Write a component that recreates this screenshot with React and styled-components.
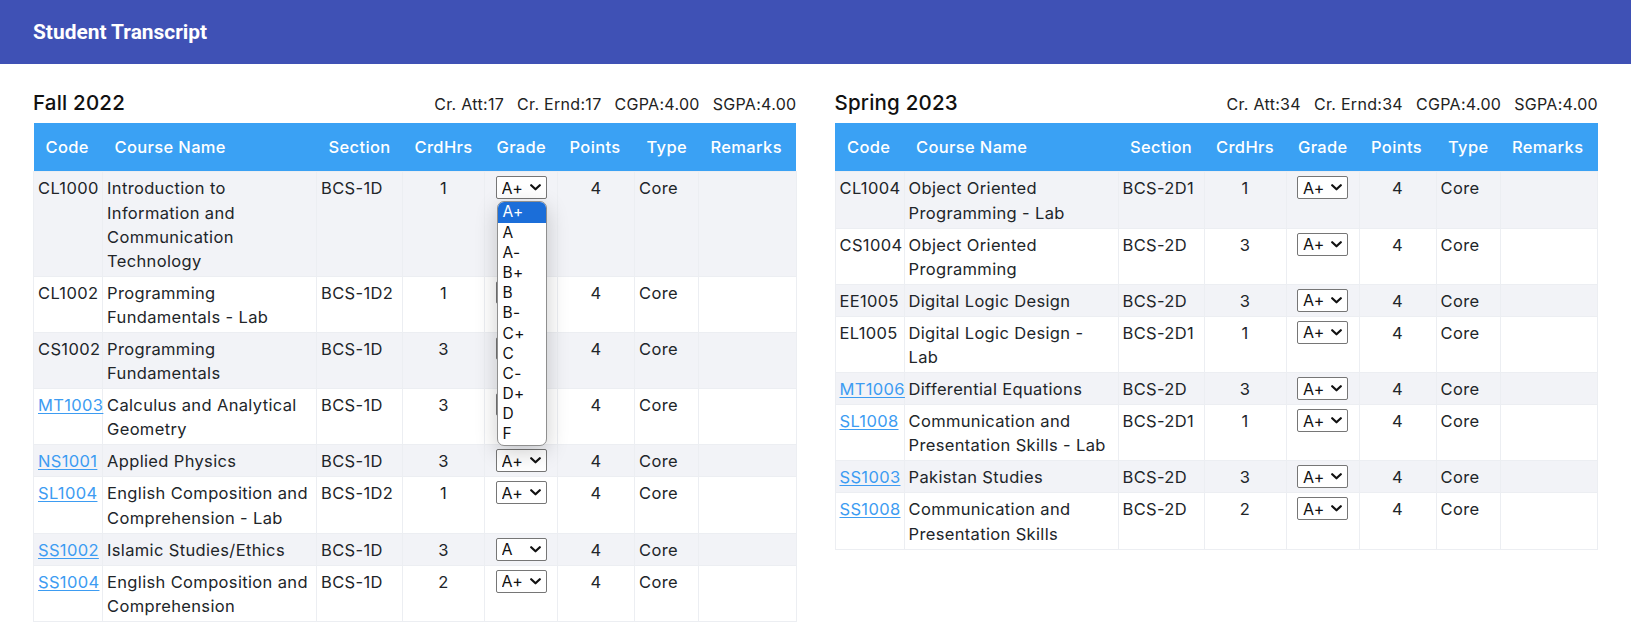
import React from "react";
import styled, { createGlobalStyle } from "styled-components";

const GlobalStyle = createGlobalStyle`
  html, body { margin: 0; padding: 0; background: #ffffff; }
  body {
    font-family: Inter, "Open Sans", "Liberation Sans", sans-serif;
    color: #212529;
  }
  * { box-sizing: border-box; }
`;

const TopBar = styled.header`
  height: 64px;
  background: #3f51b5;
  display: flex;
  align-items: center;
  padding: 0 33px;
`;

const Title = styled.h1`
  margin: 0;
  font-family: Roboto, "Liberation Sans", sans-serif;
  font-size: 20.9px;
  font-weight: 700;
  color: #ffffff;
`;

const Main = styled.main`
  display: grid;
  grid-template-columns: 1fr 1fr;
  column-gap: 38px;
  padding: 27px 33px 0;
`;

const Semester = styled.section`
  display: flex;
  flex-direction: column;
  min-width: 0;
`;

const SemesterHead = styled.div`
  display: flex;
  justify-content: space-between;
  align-items: baseline;
  margin-bottom: 8px;
`;

const SemesterName = styled.h2`
  margin: 0;
  font-size: 20.5px;
  line-height: 24px;
  font-weight: 500;
  letter-spacing: 0.2px;
  color: #111;
`;

const Stats = styled.div`
  display: flex;
  gap: 13px;
  font-size: 16px;
  letter-spacing: 0.3px;
  color: #222;
`;

const Table = styled.table`
  width: 100%;
  border-collapse: collapse;
  table-layout: fixed;
  font-size: 16.5px;
  letter-spacing: 0.35px;
`;

const HeadCell = styled.th`
  background: #3aa1f4;
  color: #ffffff;
  font-weight: 500;
  text-align: left;
  padding: 12px 12px;
  line-height: 24.4px;
  white-space: nowrap;
`;

const Row = styled.tr`
  background: ${(p) => (p.$striped ? "#f2f3f7" : "#ffffff")};
`;

const Cell = styled.td`
  border: 1px solid #eceef2;
  padding: 4px 4px 3px;
  vertical-align: top;
  line-height: 24.1px;
  white-space: nowrap;
  text-align: ${(p) => (p.$center ? "center" : "left")};
`;

const CodeLink = styled.a`
  color: #3d9cf2;
  text-decoration: underline;
  text-underline-offset: 2px;
`;

const SelectWrap = styled.div`
  position: relative;
  width: 51px;
  margin: 0 auto;
`;

const GradeSelect = styled.select`
  display: block;
  width: 51px;
  height: 23px;
  margin: 0;
  padding: 0 0 0 5px;
  appearance: none;
  -webkit-appearance: none;
  font-family: Inter, "Open Sans", sans-serif;
  font-size: 16px;
  letter-spacing: 0.3px;
  color: #111;
  background: #ffffff;
  border: 1px solid #767676;
  border-radius: 2px;
  text-align: left;
`;

const Chevron = styled.svg`
  position: absolute;
  right: 6px;
  top: 8px;
  width: 11px;
  height: 7px;
  pointer-events: none;
`;

const OptionList = styled.ul`
  position: absolute;
  top: 25px;
  left: 1px;
  width: 50px;
  margin: 0;
  padding: 0;
  list-style: none;
  background: #ffffff;
  border: 1px solid #8f8f8f;
  border-radius: 7px;
  overflow: hidden;
  z-index: 10;
  box-shadow: 0 6px 22px rgba(0, 0, 0, 0.2);
  text-align: left;
`;

const OptionItem = styled.li`
  height: 20.2px;
  line-height: 20.2px;
  padding-left: 5px;
  font-size: 15.5px;
  color: ${(p) => (p.$active ? "#ffffff" : "#111")};
  background: ${(p) => (p.$active ? "#1b6ed9" : "transparent")};
`;

const GRADES = ["A+", "A", "A-", "B+", "B", "B-", "C+", "C", "C-", "D+", "D", "F"];

const COLS = [69, 214, 86, 82, 73, 77, 64, null];
const HEADERS = ["Code", "Course Name", "Section", "CrdHrs", "Grade", "Points", "Type", "Remarks"];

const semesters = [
  {
    name: "Fall 2022",
    stats: ["Cr. Att:17", "Cr. Ernd:17", "CGPA:4.00", "SGPA:4.00"],
    rows: [
      { code: "CL1000", name: ["Introduction to", "Information and", "Communication", "Technology"], sec: "BCS-1D", hrs: 1, grade: "A+", open: true },
      { code: "CL1002", name: ["Programming", "Fundamentals - Lab"], sec: "BCS-1D2", hrs: 1, grade: "A+" },
      { code: "CS1002", name: ["Programming", "Fundamentals"], sec: "BCS-1D", hrs: 3, grade: "A+" },
      { code: "MT1003", link: true, name: ["Calculus and Analytical", "Geometry"], sec: "BCS-1D", hrs: 3, grade: "A+" },
      { code: "NS1001", link: true, name: ["Applied Physics"], sec: "BCS-1D", hrs: 3, grade: "A+" },
      { code: "SL1004", link: true, name: ["English Composition and", "Comprehension - Lab"], sec: "BCS-1D2", hrs: 1, grade: "A+" },
      { code: "SS1002", link: true, name: ["Islamic Studies/Ethics"], sec: "BCS-1D", hrs: 3, grade: "A" },
      { code: "SS1004", link: true, name: ["English Composition and", "Comprehension"], sec: "BCS-1D", hrs: 2, grade: "A+" },
    ],
  },
  {
    name: "Spring 2023",
    stats: ["Cr. Att:34", "Cr. Ernd:34", "CGPA:4.00", "SGPA:4.00"],
    rows: [
      { code: "CL1004", name: ["Object Oriented", "Programming - Lab"], sec: "BCS-2D1", hrs: 1, grade: "A+" },
      { code: "CS1004", name: ["Object Oriented", "Programming"], sec: "BCS-2D", hrs: 3, grade: "A+" },
      { code: "EE1005", name: ["Digital Logic Design"], sec: "BCS-2D", hrs: 3, grade: "A+" },
      { code: "EL1005", name: ["Digital Logic Design -", "Lab"], sec: "BCS-2D1", hrs: 1, grade: "A+" },
      { code: "MT1006", link: true, name: ["Differential Equations"], sec: "BCS-2D", hrs: 3, grade: "A+" },
      { code: "SL1008", link: true, name: ["Communication and", "Presentation Skills - Lab"], sec: "BCS-2D1", hrs: 1, grade: "A+" },
      { code: "SS1003", link: true, name: ["Pakistan Studies"], sec: "BCS-2D", hrs: 3, grade: "A+" },
      { code: "SS1008", link: true, name: ["Communication and", "Presentation Skills"], sec: "BCS-2D", hrs: 2, grade: "A+" },
    ],
  },
];

function GradePicker({ value, open }) {
  return (
    <SelectWrap>
      <GradeSelect defaultValue={value}>
        {GRADES.map((g) => (
          <option key={g} value={g}>{g}</option>
        ))}
      </GradeSelect>
      <Chevron viewBox="0 0 11 7">
        <path d="M1.2 1.2 L5.5 5.3 L9.8 1.2" fill="none" stroke="#111" strokeWidth="2.2" strokeLinecap="round" strokeLinejoin="round" />
      </Chevron>
      {open && (
        <OptionList>
          {GRADES.map((g) => (
            <OptionItem key={g} $active={g === value}>{g}</OptionItem>
          ))}
        </OptionList>
      )}
    </SelectWrap>
  );
}

function SemesterTable({ data }) {
  return (
    <Semester>
      <SemesterHead>
        <SemesterName>{data.name}</SemesterName>
        <Stats>
          {data.stats.map((s) => (
            <span key={s}>{s}</span>
          ))}
        </Stats>
      </SemesterHead>
      <Table>
        <colgroup>
          {COLS.map((w, i) => (
            <col key={i} style={w ? { width: w } : undefined} />
          ))}
        </colgroup>
        <thead>
          <tr>
            {HEADERS.map((h) => (
              <HeadCell key={h}>{h}</HeadCell>
            ))}
          </tr>
        </thead>
        <tbody>
          {data.rows.map((r, i) => (
            <Row key={r.code} $striped={i % 2 === 0}>
              <Cell>{r.link ? <CodeLink href="#">{r.code}</CodeLink> : r.code}</Cell>
              <Cell>
                {r.name.map((line, j) => (
                  <React.Fragment key={j}>
                    {j > 0 && <br />}
                    {line}
                  </React.Fragment>
                ))}
              </Cell>
              <Cell>{r.sec}</Cell>
              <Cell $center>{r.hrs}</Cell>
              <Cell $center>
                <GradePicker value={r.grade} open={r.open} />
              </Cell>
              <Cell $center>4</Cell>
              <Cell>Core</Cell>
              <Cell />
            </Row>
          ))}
        </tbody>
      </Table>
    </Semester>
  );
}

export default function App() {
  return (
    <>
      <GlobalStyle />
      <TopBar>
        <Title>Student Transcript</Title>
      </TopBar>
      <Main>
        {semesters.map((s) => (
          <SemesterTable key={s.name} data={s} />
        ))}
      </Main>
    </>
  );
}
